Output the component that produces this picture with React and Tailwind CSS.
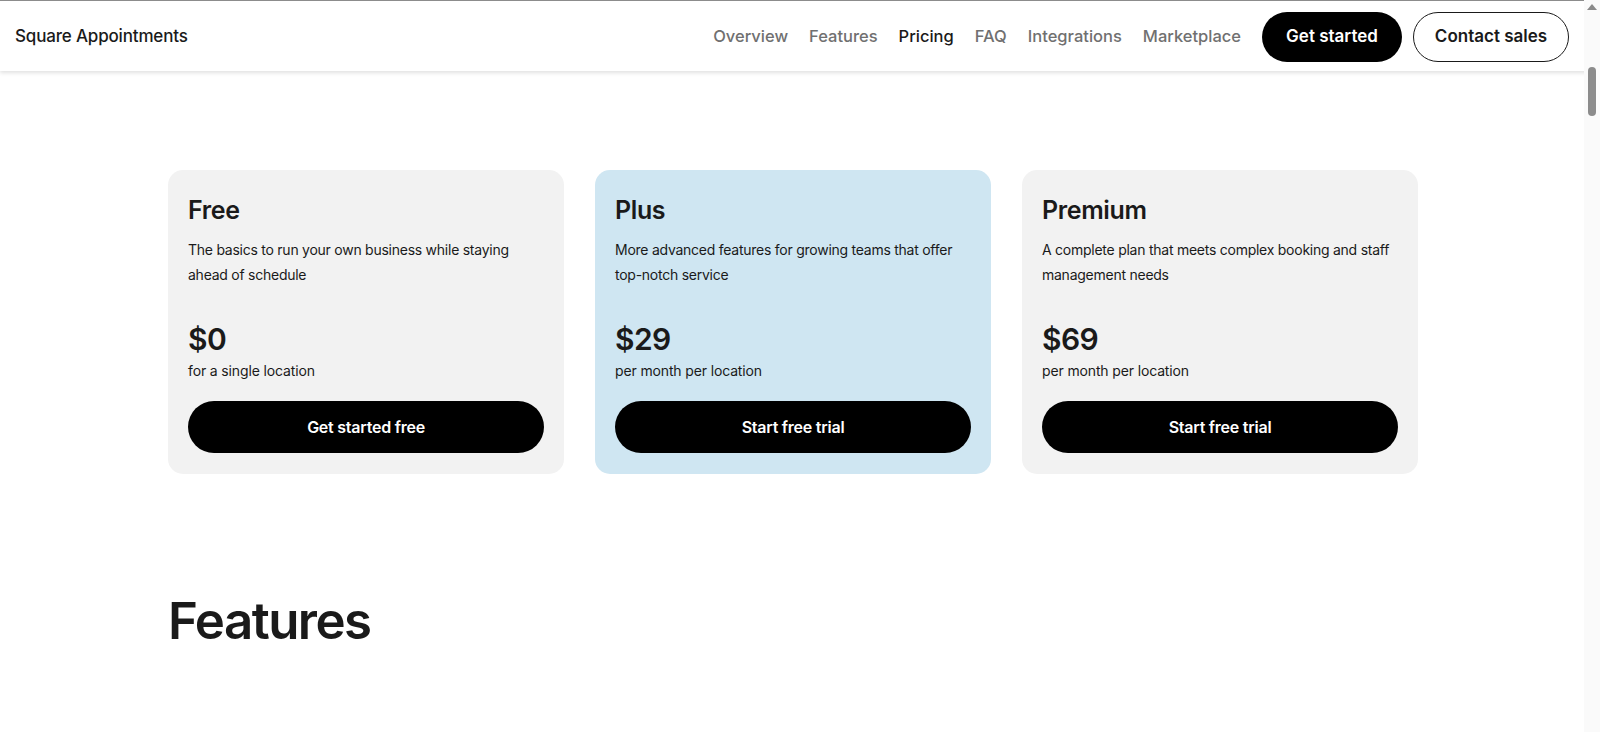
const navLinks = [
  { label: "Overview", active: false },
  { label: "Features", active: false },
  { label: "Pricing", active: true },
  { label: "FAQ", active: false },
  { label: "Integrations", active: false },
  { label: "Marketplace", active: false },
];

const plans = [
  {
    name: "Free",
    desc: "The basics to run your own business while staying ahead of schedule",
    price: "$0",
    note: "for a single location",
    cta: "Get started free",
    bg: "bg-[#f2f2f2]",
  },
  {
    name: "Plus",
    desc: "More advanced features for growing teams that offer top-notch service",
    price: "$29",
    note: "per month per location",
    cta: "Start free trial",
    bg: "bg-[#cfe6f2]",
  },
  {
    name: "Premium",
    desc: "A complete plan that meets complex booking and staff management needs",
    price: "$69",
    note: "per month per location",
    cta: "Start free trial",
    bg: "bg-[#f2f2f2]",
  },
];

function PlanCard({ plan }) {
  return (
    <div className={`w-[396px] rounded-[15px] ${plan.bg} px-5 pt-[25px] pb-[21px]`}>
      <h3 className="text-[25px] leading-[30px] font-semibold text-[#1a1a1a] tracking-[-0.015em]">
        {plan.name}
      </h3>
      <p className="mt-[12px] text-[14px] leading-[25px] text-[#1a1a1a] tracking-[-0.018em]">
        {plan.desc}
      </p>
      <div className="mt-[32px] text-[30px] leading-[40px] font-semibold text-[#1a1a1a] tracking-[-0.02em]">
        {plan.price}
      </div>
      <div className="mt-[2px] text-[14px] leading-[20px] text-[#1a1a1a] tracking-[-0.01em]">
        {plan.note}
      </div>
      <button className="mt-5 h-[52px] w-full rounded-full bg-black text-white text-[16px] font-semibold tracking-[-0.015em]">
        {plan.cta}
      </button>
    </div>
  );
}

function FakeScrollbar() {
  return (
    <div className="fixed top-0 right-0 w-[16px] h-screen bg-[#fafafa]">
      <div className="mx-auto mt-[4px] w-0 h-0 border-l-[5px] border-r-[5px] border-b-[6px] border-l-transparent border-r-transparent border-b-[#8a8a8a]" />
      <div className="mx-auto mt-[57px] w-[8px] h-[49px] rounded-full bg-[#8c8c8c]" />
    </div>
  );
}

export default function App() {
  return (
    <div className="min-h-[1400px] bg-white font-['Inter',sans-serif] text-[#1a1a1a]">
      <header className="h-[71px] border-t border-[#8c8c8c] bg-white shadow-[0_2px_4px_rgba(0,0,0,0.12)] flex items-center pl-[15px] pr-[31px]">
        <div className="pt-[2px] text-[17px] font-medium tracking-[-0.01em] text-[#1a1a1a]">
          Square Appointments
        </div>
        <nav className="ml-auto flex items-center gap-[21px] pt-[1px]">
          {navLinks.map((l) => (
            <a
              key={l.label}
              href="#"
              className={`text-[16.5px] font-medium ${
                l.active ? "text-[#1a1a1a]" : "text-[#707070]"
              }`}
            >
              {l.label}
            </a>
          ))}
          <button className="h-[50px] w-[140px] rounded-full bg-black text-white text-[17px] font-semibold">
            Get started
          </button>
          <button className="-ml-[10px] h-[50px] w-[156px] rounded-full border border-[#1a1a1a] bg-white text-[#1a1a1a] text-[17px] font-semibold">
            Contact sales
          </button>
        </nav>
      </header>

      <main className="pl-[168px]">
        <section className="mt-[99px] flex gap-[31px]">
          {plans.map((p) => (
            <PlanCard key={p.name} plan={p} />
          ))}
        </section>

        <h2 className="mt-[117px] text-[51px] leading-[60px] font-semibold tracking-[-0.03em] text-[#1a1a1a]">
          Features
        </h2>
      </main>

      <FakeScrollbar />
    </div>
  );
}
